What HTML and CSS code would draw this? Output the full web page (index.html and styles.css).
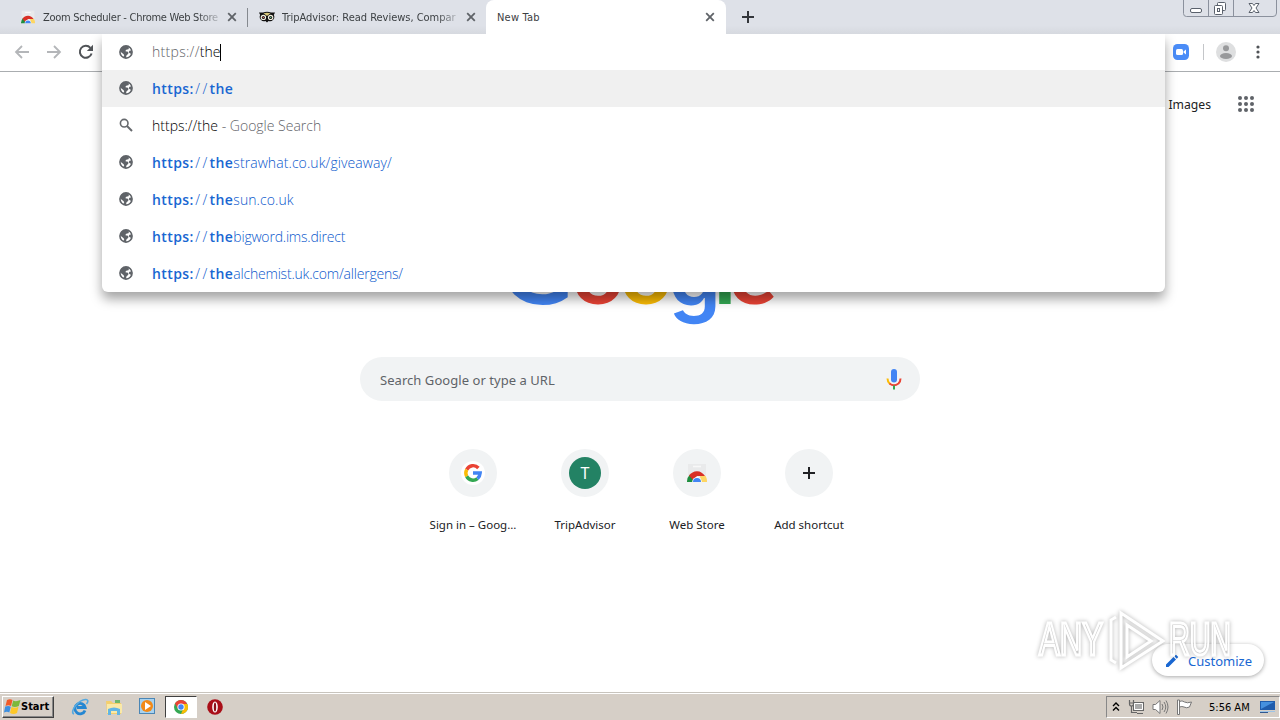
FILE: index.html
```
<!DOCTYPE html>
<html lang="en">
<head>
    <meta charset="UTF-8">
    <meta name="viewport" content="width=device-width, initial-scale=1.0">
    <title>New Tab</title>
    <link rel="stylesheet" href="styles.css">
</head>
<body>
    <!-- Shared icons -->
    <svg class="defs">
        <symbol id="globe" viewBox="0 0 24 24">
            <circle cx="12" cy="12" r="10.4" fill="#fff" stroke="#5f6368" stroke-width="2.800"/>
            <path fill="#5f6368" d="M10 1.500H15.500L17 5Q17 7.500 14 7.800L11.500 8.500V11H14.500Q16.500 12 16 15L13 17.500L11.500 22.500L7 21L9 17.500L7.500 15.500L2 11L5 4Z M18 10L22 9V14L19.500 15L16.500 12.500Z"/>
        </symbol>
        <symbol id="close" viewBox="0 0 10 10">
            <path d="M1.2 1.2 L8.8 8.8 M8.8 1.2 L1.2 8.8" stroke="#5f6368" stroke-width="1.800"/>
        </symbol>
        <symbol id="webstore" viewBox="0 0 20 20">
            <path d="M1 1H19V18H1Z" fill="#e9eaeb"/>
            <path d="M6 3.5H14" stroke="#f8f8f8" stroke-width="1.500"/>
            <path d="M0 19 A10 10 0 0 1 3 11.5 L7 16 L6 19Z" fill="#1e8e3e"/>
            <path d="M2 12.500 A9.500 9.500 0 0 1 18 13 L10 13 L6 17Z" fill="#d93025"/>
            <path d="M13 13 H18.600 A10 10 0 0 1 20 19 H14Z" fill="#fdd663"/>
            <path d="M5.200 19 A4.800 4.800 0 0 1 14.800 19Z" fill="#fff"/>
            <path d="M6 19 A4 4 0 0 1 14 19Z" fill="#4285f4"/>
        </symbol>
    </svg>

    <header class="tabstrip">
        <div class="tab tab-first">
            <svg class="favicon" width="14" height="14"><use href="#webstore"/></svg>
            <span class="tab-title faded">Zoom Scheduler - Chrome Web Store</span>
            <svg width="10" height="10"><use href="#close"/></svg>
        </div>
        <div class="tab tab-second">
            <svg class="favicon" width="16" height="12" viewBox="0 0 16 12">
                <path d="M0 1.500H4Q8 0 12 1.500H16L14.800 4A4.300 4.300 0 0 1 9.500 10L8 11.500L6.500 10A4.300 4.300 0 0 1 1.200 4Z" fill="#111"/>
                <path d="M4.500 2.300Q8 1 11.500 2.300L8 5Z" fill="#d9c87a"/>
                <circle cx="4.400" cy="6.400" r="2.700" fill="#f3efdf"/><circle cx="11.600" cy="6.400" r="2.700" fill="#f3efdf"/>
                <circle cx="4.400" cy="6.400" r="1.500" fill="#111"/><circle cx="11.600" cy="6.400" r="1.500" fill="#111"/>
                <circle cx="4.400" cy="6.400" r=".7" fill="#d66"/><circle cx="11.600" cy="6.400" r=".7" fill="#6b8"/>
            </svg>
            <span class="tab-title faded">TripAdvisor: Read Reviews, Compar</span>
            <svg width="10" height="10"><use href="#close"/></svg>
        </div>
        <div class="tab tab-active">
            <span class="tab-title">New Tab</span>
            <svg width="10" height="10"><use href="#close"/></svg>
        </div>
        <svg class="new-tab" width="12" height="12" viewBox="0 0 12 12"><path d="M6 0V12M0 6H12" stroke="#33363b" stroke-width="2"/></svg>
        <div class="window-controls">
            <svg width="94" height="17" viewBox="0 0 94 17" fill="none" stroke="#5a616c">
                <path d="M.5 0V13.5Q.5 16.5 3.5 16.5H90Q93.5 16.5 93.5 13V0M25.5 0V16M50.5 0V16" stroke="#8b919d"/>
                <rect x="7.5" y="8.5" width="11" height="4" rx="1.5" fill="#fff"/>
                <rect x="34.500" y="2.5" width="8" height="8" rx="1" fill="#fff"/>
                <rect x="31.500" y="5.500" width="8" height="9" rx="1" fill="#fff"/><rect x="34.500" y="8.500" width="2" height="3"/>
                <path d="M66 3.500H69.500L71 5.500L72.500 3.500H76L73 8L76 12.500H72.500L71 10.500L69.500 12.500H66L69 8Z" fill="#fff"/>
            </svg>
        </div>
    </header>

    <div class="toolbar">
        <div class="nav-buttons">
            <svg width="16" height="14" viewBox="0 0 16 14" fill="none" stroke="#b4b6b9" stroke-width="1.8"><path d="M15 7H2M8 1L2 7L8 13"/></svg>
            <svg width="16" height="14" viewBox="0 0 16 14" fill="none" stroke="#b4b6b9" stroke-width="1.8"><path d="M1 7H14M8 1L14 7L8 13"/></svg>
            <svg width="16" height="16" viewBox="0 0 16 16"><path d="M13.600 9.500A6 6 0 1 1 12.400 3.800" fill="none" stroke="#505357" stroke-width="2"/><path d="M15 .8V7H8.800Z" fill="#505357"/></svg>
        </div>
        <div class="toolbar-actions">
            <svg width="16" height="16" viewBox="0 0 16 16"><rect width="16" height="16" rx="4.500" fill="#4a8cf7"/><rect x="3" y="5" width="7" height="6" rx="1.500" fill="#fff"/><path d="M10.500 7.500L13 5.500V10.500L10.500 8.500Z" fill="#fff"/></svg>
            <span class="separator"></span>
            <svg width="20" height="20" viewBox="0 0 20 20"><circle cx="10" cy="10" r="10" fill="#dedfe0"/><circle cx="10" cy="6.200" r="3" fill="#98999b"/><ellipse cx="10" cy="14" rx="6" ry="3" fill="#98999b"/></svg>
            <svg width="4" height="14" viewBox="0 0 4 14" fill="#505357"><circle cx="2" cy="2" r="1.600"/><circle cx="2" cy="7" r="1.600"/><circle cx="2" cy="12" r="1.600"/></svg>
        </div>
    </div>

    <!-- Omnibox dropdown, floats over the page -->
    <section class="omnibox">
        <div class="omnibox-input">
            <svg width="14" height="14"><use href="#globe"/></svg>
            <span class="typed"><span class="scheme">https://</span>the<i class="caret"></i></span>
        </div>
        <ul class="suggestions">
            <li class="selected">
                <svg width="14" height="14"><use href="#globe"/></svg>
                <span class="url"><b>https:</b><span class="slashes">//</span><b>the</b></span>
            </li>
            <li>
                <svg width="14" height="14" viewBox="0 0 14 14" fill="none" stroke="#66696d"><circle cx="5.200" cy="5.200" r="3.800" stroke-width="1.600"/><path d="M8 8L13 13" stroke-width="1.900"/></svg>
                <span class="query">https://the<span class="search-hint"> - Google Search</span></span>
            </li>
            <li>
                <svg width="14" height="14"><use href="#globe"/></svg>
                <span class="url"><b>https:</b><span class="slashes">//</span><b>the</b>strawhat.co.uk/giveaway/</span>
            </li>
            <li>
                <svg width="14" height="14"><use href="#globe"/></svg>
                <span class="url"><b>https:</b><span class="slashes">//</span><b>the</b>sun.co.uk</span>
            </li>
            <li>
                <svg width="14" height="14"><use href="#globe"/></svg>
                <span class="url tight"><b>https:</b><span class="slashes">//</span><b>the</b>bigword.ims.direct</span>
            </li>
            <li>
                <svg width="14" height="14"><use href="#globe"/></svg>
                <span class="url tight"><b>https:</b><span class="slashes">//</span><b>the</b>alchemist.uk.com/allergens/</span>
            </li>
        </ul>
    </section>

    <main class="page">
        <nav class="page-nav">
            <span>Images</span>
            <svg width="16" height="16" viewBox="0 0 16 16" fill="#5f6368">
                <circle cx="2" cy="2" r="2"/><circle cx="8" cy="2" r="2"/><circle cx="14" cy="2" r="2"/>
                <circle cx="2" cy="8" r="2"/><circle cx="8" cy="8" r="2"/><circle cx="14" cy="8" r="2"/>
                <circle cx="2" cy="14" r="2"/><circle cx="8" cy="14" r="2"/><circle cx="14" cy="14" r="2"/>
            </svg>
        </nav>
        <svg class="logo" width="280" height="130" viewBox="0 0 280 130">
            <text y="104"><tspan class="blue cap" x="0">G</tspan><tspan class="red" x="71.500">o</tspan><tspan class="yellow" x="119.500">o</tspan><tspan class="blue descender" x="168.500" y="106">g</tspan><tspan class="green" x="213.500" y="104">l</tspan><tspan class="red" x="228">e</tspan></text>
        </svg>
        <div class="search-box">
            <span>Search Google or type a URL</span>
            <svg width="16" height="22" viewBox="0 0 16 22" fill="none" stroke-width="2">
                <path d="M1.500 9.500Q1.500 13 4 15" stroke="#fbbc05"/>
                <path d="M3.500 14.500Q8 18 12.500 14.500Q14.500 12.500 14.500 9.500" stroke="#ea4335"/>
                <path d="M8 16.500V20.500" stroke="#34a853"/>
                <rect x="5" y="0" width="6" height="13.500" rx="3" fill="#4285f4"/>
            </svg>
        </div>
        <div class="shortcuts">
            <div class="shortcut">
                <div class="shortcut-icon">
                    <svg width="24" height="24" viewBox="0 0 24 24" fill="none" stroke-width="3.400">
                        <circle cx="12" cy="12" r="12" fill="#fff"/>
                        <path d="M17.400 7A7.200 7.200 0 0 0 5.700 8.600" stroke="#ea4335"/>
                        <path d="M5.700 8.600A7.200 7.200 0 0 0 5.700 15.400" stroke="#fbbc05"/>
                        <path d="M5.700 15.400A7.200 7.200 0 0 0 16.500 17.600" stroke="#34a853"/>
                        <path d="M16.500 17.600Q19 15.500 19.200 12H12" stroke="#4285f4"/>
                    </svg>
                </div>
                <span>Sign in – Goog...</span>
            </div>
            <div class="shortcut">
                <div class="shortcut-icon"><span class="letter">T</span></div>
                <span>TripAdvisor</span>
            </div>
            <div class="shortcut">
                <div class="shortcut-icon"><svg width="20" height="20"><use href="#webstore"/></svg></div>
                <span>Web Store</span>
            </div>
            <div class="shortcut">
                <div class="shortcut-icon"><svg width="12" height="12" viewBox="0 0 12 12"><path d="M6 0V12M0 6H12" stroke="#202124" stroke-width="2"/></svg></div>
                <span>Add shortcut</span>
            </div>
        </div>
        <button class="customize">
            <svg width="14" height="14" viewBox="0 0 14 14" fill="#1967d2"><path d="M1 10.500L8.500 3L11 5.500L3.500 13H1ZM9.300 2.200L11 .7L13.300 3L11.800 4.700Z"/></svg>
            <span>Customize</span>
        </button>
        <svg class="watermark" width="200" height="70" viewBox="0 0 200 70">
            <text x="3" y="49" textLength="64" lengthAdjust="spacingAndGlyphs">ANY</text>
            <text x="133" y="49" textLength="62" lengthAdjust="spacingAndGlyphs">RUN</text>
            <path d="M80 11L75 14V54L80 57M85 62V7L127 35Z M91 19L115 35L91 51Z"/>
        </svg>
    </main>

    <footer class="taskbar">
        <div class="start">
            <svg width="17" height="16" viewBox="0 0 17 16">
                <path d="M3 1Q6-.5 8.500 1L7 7Q4.500 5.500 1.500 7Z" fill="#f05a28"/><path d="M9.200 1.500Q12 3 16.500 1L14.800 7Q11 9 7.700 7.300Z" fill="#7cb83b"/>
                <path d="M1.200 7.600Q4.500 6.200 6.800 7.700L5.300 13.500Q3 12 0 13.500Z" fill="#3d8fe0"/><path d="M7.500 8Q11 9.500 14.500 7.800L13 14Q9.500 16 6 14Z" fill="#fdc828"/>
            </svg>
            <span>Start</span>
        </div>
        <div class="quick-launch">
            <svg width="18" height="18" viewBox="0 0 18 18" fill="none"><path d="M14 12.500A5.200 5.200 0 1 1 14.200 9.500H6" stroke="#2587d2" stroke-width="2.800"/><path d="M3 16C-2 14 8 1 15 1.500Q18.500 2 15.500 6" stroke="#55a9e0" stroke-width="1.600"/></svg>
            <svg width="18" height="18" viewBox="0 0 18 18"><path d="M1 3H6L8 5H16V16H2Z" fill="#f4cf6d"/><path d="M2 6H17V15H2Z" fill="#fae9a7"/><path d="M3 17V11Q9 8 15 11V17H12V13H6V17Z" fill="#62b5e5"/><path d="M10 2H15V5H10Z" fill="#70b76b"/></svg>
            <svg width="17" height="17" viewBox="0 0 17 17"><rect x=".5" y=".5" width="15" height="15" fill="#a8d2ef" stroke="#4b86b5"/><circle cx="8" cy="8" r="6" fill="#f28a18"/><path d="M6 4L12 8L6 12Z" fill="#fff"/></svg>
            <span class="running">
                <svg width="14" height="14" viewBox="0 0 14 14"><circle cx="7" cy="7" r="7" fill="#34a853"/><path d="M1 3.500A7 7 0 0 1 13 3.500L7 7L4 9Z" fill="#ea4335"/><path d="M7 4H13.300A7 7 0 0 1 7 14L10 7Z" fill="#fbbc05"/><circle cx="7" cy="7" r="3.600" fill="#fff"/><circle cx="7" cy="7" r="2.700" fill="#4285f4"/></svg>
            </span>
            <svg width="16" height="16" viewBox="0 0 16 16"><circle cx="8" cy="8" r="7.800" fill="#a90e18"/><ellipse cx="8" cy="8" rx="2.800" ry="5.500" fill="#fff"/><ellipse cx="8" cy="8" rx="1.200" ry="4.500" fill="#8c1018"/></svg>
        </div>
        <div class="tray">
            <svg width="8" height="10" viewBox="0 0 8 10" fill="none" stroke="#000" stroke-width="1.400"><path d="M1 4L4 1L7 4M1 8.500L4 5.500L7 8.500"/></svg>
            <svg width="17" height="16" viewBox="0 0 17 16" fill="none" stroke="#666"><rect x="5.500" y="3.500" width="10" height="8" fill="#aaa"/><path d="M9 14.500H15M3.500 7V13.500H9M1.500 1V5Q1.500 7 3.500 7T5.500 5V1M1.500 4H5.500" stroke-width="1.200"/><path d="M6.500 4.500H14.500V10.500H6.500Z" stroke="#fff"/></svg>
            <svg width="17" height="16" viewBox="0 0 17 16" fill="none" stroke="#777"><path d="M1 5.500H3.500L8 1.500V14.500L3.500 10.500H1Z" fill="#fff"/><path d="M10 5Q12 8 10 11M12 3Q15.500 8 12 13M14 1.500Q18 8 14 14.500"/></svg>
            <svg width="17" height="16" viewBox="0 0 17 16" fill="#fff" stroke="#777"><path d="M1.500 1V15.500H3.500V1ZM3.500 2.500Q6 1 8.500 3Q11 4.500 15.500 3L13.500 8Q10.500 9.500 8 8Q6 7 3.500 8Z"/></svg>
            <span class="clock">5:56 AM</span>
            <svg width="16" height="13" viewBox="0 0 16 13"><path d="M0 1H15V10H0Z" fill="#205cac"/><path d="M1 2H14L1 9Z" fill="#4690de"/><path d="M0 11.500H15" stroke="#9ec4e7"/><path d="M0 12.500H8" stroke="#30588f"/></svg>
        </div>
    </footer>
</body>
</html>
```
FILE: styles.css
```
:root {
    --link-color: #1967d2;
    --field-color: #f1f3f4;
    --strip-color: #dee1e8;
    --taskbar-color: #d6cfc7;
    --text-color: #202124;
}

* {
    margin: 0;
    padding: 0;
    box-sizing: border-box;
}

body {
    position: relative;
    display: flex;
    flex-direction: column;
    width: 1280px;
    height: 720px;
    overflow: hidden;
    background-color: white;
    color: var(--text-color);
    font-family: "Noto Sans", "Open Sans", sans-serif;
}

svg {
    display: block;
    flex-shrink: 0;
}

.defs {
    position: absolute;
    width: 0;
    height: 0;
}

/* Tabs */
.tabstrip {
    display: flex;
    height: 34px;
    background: linear-gradient(var(--strip-color) 75%, #d6d9df);
    font-family: "DejaVu Sans Condensed", "DejaVu Sans", sans-serif;
    font-size: 11px;
}

.tab {
    display: flex;
    align-items: center;
    height: 34px;
    white-space: nowrap;
}

.tab-title {
    flex: 1;
    color: #3c4043;
}

.faded {
    mask-image: linear-gradient(to right, #000 88%, rgba(0, 0, 0, 0.2));
}

.tab-first {
    width: 247px;
    padding: 0 10px 0 21px;
}

.tab-first .tab-title {
    margin: 0 8px;
    letter-spacing: -0.27px;
}

.tab-second {
    width: 239px;
    padding: 0 10px 0 12px;
    position: relative;
}

.tab-second::before {
    content: "";
    position: absolute;
    left: 0;
    top: 8px;
    width: 1px;
    height: 19px;
    background-color: #85898f;
}

.tab-second .tab-title {
    margin: 0 8px 0 7px;
    letter-spacing: -0.02px;
}

.tab-active {
    width: 240px;
    padding: 0 11px;
    background-color: white;
    border-radius: 8px 8px 0 0;
}

.tab-active .tab-title {
    letter-spacing: 0.2px;
}

.new-tab {
    margin: 11px 0 0 16px;
}

.window-controls {
    margin: 0 3px 0 auto;
}

/* Toolbar */
.toolbar {
    display: flex;
    justify-content: space-between;
    height: 38px;
    padding: 0 20px 2px 14px;
    border-bottom: 1px solid #aaadb0;
}

.nav-buttons,
.toolbar-actions {
    display: flex;
    align-items: center;
}

.nav-buttons {
    gap: 16px;
}

.separator {
    width: 1px;
    height: 16px;
    margin: 0 12px 0 14px;
    background-color: #c4c6c9;
}

.toolbar-actions svg:last-child {
    margin-left: 20px;
}

/* Omnibox */
.omnibox {
    position: absolute;
    z-index: 10;
    left: 102px;
    top: 34px;
    width: 1063px;
    height: 258px;
    background-color: white;
    border-radius: 0 0 6px 6px;
    box-shadow: 0 7px 12px rgba(0, 0, 0, 0.36);
    clip-path: inset(0 -20px -30px -20px);
    font-family: "Open Sans", "Noto Sans", sans-serif;
    font-size: 14px;
    font-weight: 300;
}

.omnibox-input,
.suggestions li {
    display: flex;
    align-items: center;
    gap: 19px;
    height: 37px;
    padding-left: 17px;
    white-space: nowrap;
}

.suggestions svg {
    margin-bottom: 2px;
}

.omnibox-input {
    height: 36px;
    padding-bottom: 1px;
    color: #000;
}

.suggestions {
    list-style: none;
}

.suggestions .selected {
    background-color: #f0f0f0;
}

.scheme,
.search-hint {
    color: #5f6368;
}

.scheme {
    letter-spacing: 0.3px;
}

.caret {
    display: inline-block;
    width: 1px;
    height: 17px;
    background-color: #000;
    vertical-align: -4px;
}

.url {
    color: #0b58cc;
    letter-spacing: 0.08px;
}

.tight {
    letter-spacing: -0.2px;
}

.url b {
    color: var(--link-color);
    font-weight: 600;
    letter-spacing: 0.4px;
}

.slashes {
    margin-left: 1.5px;
    letter-spacing: 2.4px;
}

.query {
    color: #000;
}

/* New tab page */
.page {
    position: relative;
    display: flex;
    flex-direction: column;
    align-items: center;
    height: 620px;
    overflow: hidden;
}

.page-nav {
    display: flex;
    align-items: center;
    align-self: flex-end;
    gap: 27px;
    height: 64px;
    padding-right: 26px;
    font-size: 12.2px;
}

.logo {
    margin-top: 64px;
    font-family: Lato, sans-serif;
    font-size: 92px;
    font-weight: 700;
}

.cap {
    font-size: 100px;
}

.descender {
    font-family: Inter, sans-serif;
    font-size: 84px;
    font-weight: 600;
}

.blue {
    fill: #4285f4;
}

.red {
    fill: #ea4335;
}

.yellow {
    fill: #fbbc05;
}

.green {
    fill: #34a853;
}

.search-box {
    display: flex;
    align-items: center;
    justify-content: space-between;
    width: 560px;
    height: 44px;
    margin-top: 27px;
    padding: 1px 18px 0 20px;
    border-radius: 22px;
    background-color: var(--field-color);
    color: #5f6368;
    font-size: 13px;
    letter-spacing: 0.05px;
}

.shortcuts {
    display: flex;
    width: 448px;
    margin: 48px 0 0 2px;
}

.shortcut {
    display: flex;
    flex-direction: column;
    align-items: center;
    width: 112px;
    gap: 20px;
    font-size: 11.5px;
    line-height: 16px;
}

.shortcut-icon {
    display: flex;
    align-items: center;
    justify-content: center;
    width: 48px;
    height: 48px;
    border-radius: 50%;
    background-color: var(--field-color);
}

.letter {
    width: 32px;
    height: 32px;
    border-radius: 50%;
    background-color: #238264;
    color: white;
    font-size: 16px;
    line-height: 32px;
    text-align: center;
}

.customize {
    position: absolute;
    right: 16px;
    bottom: 16px;
    display: flex;
    align-items: center;
    gap: 9px;
    width: 112px;
    height: 32px;
    padding: 1px 0 0 13px;
    border: none;
    border-radius: 16px;
    background-color: white;
    box-shadow: 0 1px 4px rgba(0, 0, 0, 0.35);
    color: var(--link-color);
    font-family: inherit;
    font-size: 13px;
}

.watermark {
    position: absolute;
    left: 1036px;
    top: 534px;
    fill: none;
    stroke: #fff;
    stroke-width: 3;
    filter: drop-shadow(0 0 2px rgba(0, 0, 0, 0.32));
    font-family: "Liberation Sans", sans-serif;
    font-size: 46px;
}

/* Taskbar */
.taskbar {
    display: flex;
    align-items: center;
    height: 28px;
    border-top: 1px solid #c8c4bd;
    box-shadow: inset 0 1px #fff;
    background-color: var(--taskbar-color);
}

.start {
    display: flex;
    align-items: center;
    width: 52px;
    height: 22px;
    margin-left: 2px;
    padding-left: 1px;
    border: 1px solid;
    border-color: #fff #404040 #404040 #fff;
    box-shadow: inset -1px -1px #888;
    color: #000;
    font-family: "DejaVu Sans Condensed", sans-serif;
    font-size: 11px;
    font-weight: 700;
}

.quick-launch {
    display: flex;
    align-items: center;
    margin-left: 17px;
    gap: 16px;
}

.running {
    display: flex;
    align-items: center;
    justify-content: center;
    width: 32px;
    height: 22px;
    margin: 0 -6px 0 -7px;
    border: 1px solid;
    border-color: #404040 #fff #fff #404040;
    background-color: #fff;
}

.tray {
    display: flex;
    align-items: center;
    gap: 7px;
    width: 174px;
    height: 22px;
    margin: 0 0 0 auto;
    padding-left: 5px;
    border: 1px solid;
    border-color: #888 #fff #fff #888;
}

.tray svg:nth-child(2) {
    margin-left: 1px;
}

.clock {
    width: 44px;
    margin: 1px 0 0 9px;
    color: #000;
    font-family: "DejaVu Sans Condensed", sans-serif;
    font-size: 11px;
    white-space: nowrap;
}
```
